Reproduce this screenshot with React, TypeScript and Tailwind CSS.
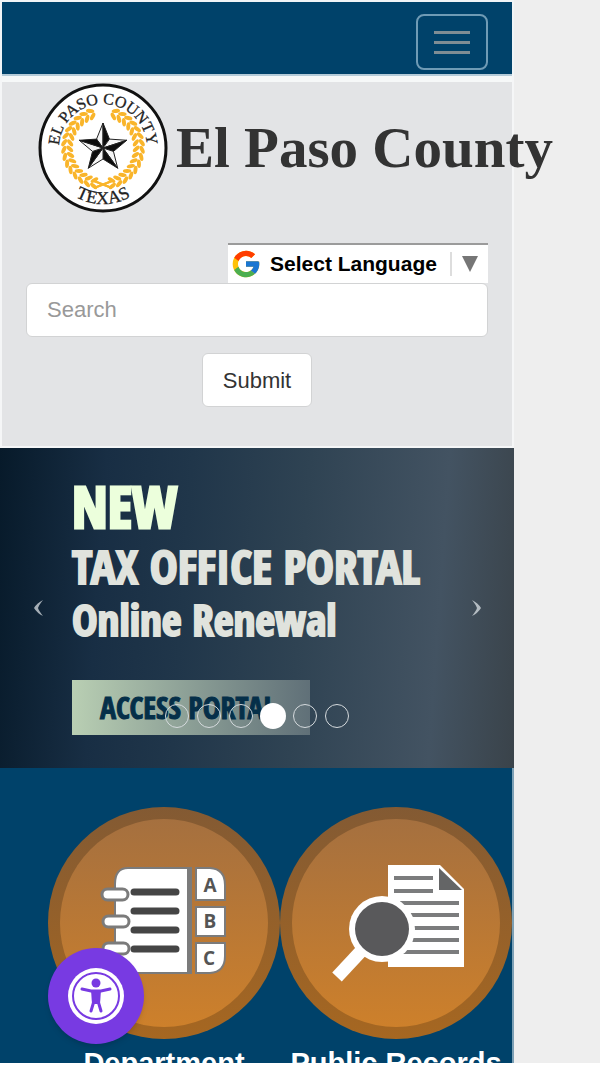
import { FcGoogle } from "react-icons/fc";

const slides = ["Elections", "Budget", "Jobs", "Tax Office Portal", "Parks", "Court"];
const activeSlide = 3;

// Laurel leaves: a pair of leaves at each step, from the bottom up each side
const leafSteps = Array.from({ length: 15 }, (_, i) => i);

const starPoint = (radius: number, deg: number) => {
  const a = (deg * Math.PI) / 180;
  return `${65 + radius * Math.sin(a)},${65 - radius * Math.cos(a)}`;
};

const Laurel = () => (
  <g fill="#f9b52b">
    {leafSteps.map((i) => (
      <g key={i} transform={`rotate(${8 + i * 10.500} 65 65)`}>
        <ellipse cx="61" cy="104" rx="4.200" ry="2" transform="rotate(32 61 104)" />
        <ellipse cx="61" cy="98" rx="4.200" ry="2" transform="rotate(-38 61 98)" />
      </g>
    ))}
    <path d="M56 105 L74 98 M74 105 L56 98" stroke="#f9b52b" strokeWidth="2" />
  </g>
);

const Seal = () => (
  <svg viewBox="0 0 130 130" className="size-[130px] shrink-0" aria-hidden="true">
    <defs>
      <path id="seal-top" d="M21 65 A44 44 0 0 1 109 65" />
      <path id="seal-bottom" d="M9 65 A56 56 0 0 0 121 65" />
    </defs>
    <circle cx="65" cy="65" r="63" fill="#fff" stroke="#111" strokeWidth="3" />
    <g fontFamily="'Liberation Serif', serif" fill="#222" stroke="#222" strokeWidth="0.3" textAnchor="middle">
      <text fontSize="16">
        <textPath href="#seal-top" startOffset="50%">EL PASO COUNTY</textPath>
      </text>
      <text fontSize="18">
        <textPath href="#seal-bottom" startOffset="50%">TEXAS</textPath>
      </text>
    </g>
    <Laurel />
    <g transform="scale(-1 1) translate(-130 0)">
      <Laurel />
    </g>
    {[0, 72, 144, 216, 288].map((deg) => (
      <g key={deg} stroke="#222" strokeWidth="1" strokeLinejoin="round">
        <polygon fill="#f4f4f4" points={`65,65 ${starPoint(25, deg)} ${starPoint(11, deg - 36)}`} />
        <polygon fill="#0c0c0c" points={`65,65 ${starPoint(25, deg)} ${starPoint(11, deg + 36)}`} />
      </g>
    ))}
  </svg>
);

const Disc = ({ id }: { id: string }) => (
  <>
    <defs>
      <linearGradient id={`${id}-face`} x1="0" y1="0" x2="0" y2="1">
        <stop offset="0" stopColor="#a5703f" />
        <stop offset="1" stopColor="#cd802b" />
      </linearGradient>
      <linearGradient id={`${id}-rim`} x1="0" y1="0" x2="0" y2="1">
        <stop offset="0" stopColor="#835a33" />
        <stop offset="1" stopColor="#a66721" />
      </linearGradient>
    </defs>
    <circle cx="116" cy="116" r="116" fill={`url(#${id}-rim)`} />
    <circle cx="116" cy="116" r="104" fill={`url(#${id}-face)`} />
  </>
);

const DepartmentIcon = () => (
  <svg viewBox="0 0 232 232" className="w-full" aria-hidden="true">
    <Disc id="department" />
    <g fill="#fff" stroke="#7b7b7b" strokeWidth="2">
      <path d="M80 61 H140 V166 H80 Q67 166 67 150 V77 Q67 61 80 61 Z" />
      <path d="M148 61 H162 Q177 62 177 78 V93 H148 Z" />
      <path d="M148 100 H177 V129 H148 Z" />
      <path d="M148 136 H177 V149 Q177 165 162 166 H148 Z" />
    </g>
    <g fill="#fff" stroke="#7b7b7b" strokeWidth="3">
      <rect x="54" y="82" width="26" height="11" rx="5.500" />
      <rect x="55" y="109" width="26" height="11" rx="5.500" />
      <rect x="55" y="136" width="26" height="11" rx="5.500" />
    </g>
    <path d="M142 60 V167" stroke="#7b7b7b" strokeWidth="4" />
    <path d="M86 85 H128 M86 104 H128 M86 123 H128 M86 142 H128" stroke="#454545" strokeWidth="7" strokeLinecap="round" />
    <g fill="#555" fontFamily="'Open Sans', sans-serif" fontWeight="700" fontSize="19" textAnchor="middle">
      <text x="162" y="85">A</text>
      <text x="162" y="121">B</text>
      <text x="161" y="158">C</text>
    </g>
  </svg>
);

const RecordsIcon = () => (
  <svg viewBox="0 0 232 232" className="w-full" aria-hidden="true">
    <Disc id="records" />
    <path d="M108 58 H160 L184 82 V160 H108 Z" fill="#fff" />
    <path d="M159 61 L182 83 H159 Z" fill="#646566" />
    <path
      d="M114 71 H153 M114 84 H153 M120 96 H179 M120 108 H179 M120 121 H179 M120 133 H179 M120 145 H179"
      stroke="#7b7c7d"
      strokeWidth="4"
    />
    <path d="M84 141 L57 170" stroke="#fff" strokeWidth="13" />
    <circle cx="102" cy="122" r="33" fill="#fff" />
    <circle cx="102" cy="122" r="27" fill="#59595b" />
  </svg>
);

const services = [
  { label: "Department", Icon: DepartmentIcon },
  { label: "Public Records", Icon: RecordsIcon },
];

const Navigation = () => (
  <nav className="flex justify-end border-2 border-b-0 border-[#f0f4f6] bg-[#00426a] px-6 pt-3 pb-1">
    <button
      type="button"
      aria-label="Toggle navigation"
      className="flex h-14 w-18 flex-col items-center justify-center gap-[7px] rounded-lg border-2 border-[#6f9bb5]"
    >
      <span className="h-[3px] w-9 bg-[#7f8d94]" />
      <span className="h-[3px] w-9 bg-[#7f8d94]" />
      <span className="h-[3px] w-9 bg-[#7f8d94]" />
    </button>
  </nav>
);

const Header = () => (
  <header className="border-2 border-t-0 border-[#f5f6f7] bg-[#e3e4e6]">
    <div className="h-2 border-t-2 border-[#b5cbd8] bg-[#f6f8f8]" />
    <a href="#home" className="flex items-center pt-px pl-9 whitespace-nowrap">
      <Seal />
      <span className="ml-2 font-['Liberation_Serif',serif] text-[57px] leading-[64px] font-bold text-[#333]">
        El Paso County
      </span>
    </a>
    <form className="px-6 pt-[30px] pb-[39px] font-['Liberation_Sans',Arial,sans-serif] text-[22px]">
      <div className="ml-auto flex h-10 w-[260px] items-center border-t-2 border-[#9b9b9b] bg-white pl-0.5">
        <FcGoogle className="size-8 shrink-0" />
        <select
          aria-label="Select Language"
          className="ml-2 min-w-0 flex-1 appearance-none bg-transparent text-[21px] leading-6 font-bold text-black"
        >
          <option>Select Language</option>
        </select>
        <span className="h-6 w-0.5 bg-[#ddd]" />
        <svg viewBox="0 0 14 14" className="mx-[10px] size-4 shrink-0" aria-hidden="true">
          <path d="M0 0 H14 L7 14 Z" fill="#767676" />
        </svg>
      </div>
      <input
        type="text"
        aria-label="Search"
        placeholder="Search"
        className="block h-[54px] w-full rounded-md border border-[#d2d3d4] bg-white px-5 placeholder:text-[#999]"
      />
      <button
        type="submit"
        className="mx-auto mt-4 block h-[54px] rounded-md border border-[#d2d3d4] bg-white px-5 text-[#333]"
      >
        Submit
      </button>
    </form>
  </header>
);

const Carousel = () => (
  <section className="relative h-80 shrink-0 bg-[#071a2a] font-['Open_Sans_Condensed','Roboto_Condensed',sans-serif] font-bold">
    <div className="h-full bg-[linear-gradient(94deg,#071a2a_0%,#182e44_20%,#20364a_36%,#2f4353_58%,#435362_84%,#3a434a_100%)] pt-7 pl-[72px]">
      <h2 className="text-[57px] leading-[60px] text-[#ecffdc] [-webkit-text-stroke:3px_#ecffdc]">NEW</h2>
      <p className="text-[47px] leading-[60px] text-[#e0e3dd] [-webkit-text-stroke:2px_#e0e3dd]">TAX OFFICE PORTAL</p>
      <p className="text-[43px] leading-[48px] text-[#e0e3dd] [-webkit-text-stroke:2px_#e0e3dd]">Online Renewal</p>
      <a
        href="#portal"
        className="mt-9 flex h-[55px] w-[238px] items-center bg-linear-to-r from-[#b9cfb3] to-[#607078] pl-7 text-[30px] text-[#052f49] [-webkit-text-stroke:1px_#052f49]"
      >
        ACCESS PORTAL
      </a>
    </div>
    <button type="button" aria-label="Previous" className="absolute inset-y-0 left-0 flex w-[77px] items-center justify-center">
      <svg viewBox="0 0 10 16" className="h-4 w-[10px]" fill="#a5aeb6">
        <path d="M9 0 Q3 3 0 8 Q3 13 9 16 Q5 11 4 8 Q5 5 9 0 Z" />
      </svg>
    </button>
    <button type="button" aria-label="Next" className="absolute inset-y-0 right-0 flex w-[77px] items-center justify-center">
      <svg viewBox="0 0 10 16" className="h-4 w-[10px]" fill="#b4bcc2">
        <path d="M1 0 Q7 3 10 8 Q7 13 1 16 Q5 11 6 8 Q5 5 1 0 Z" />
      </svg>
    </button>
    <div className="absolute inset-x-0 bottom-9 flex justify-center">
      {slides.map((slide, i) => (
        <button key={slide} type="button" aria-label={slide} className="flex h-8 w-8 items-center justify-center">
          <span className={i === activeSlide ? "size-[26px] rounded-full bg-white" : "size-6 rounded-full border border-[#d5dadd]"} />
        </button>
      ))}
    </div>
  </section>
);

const Services = () => (
  <section className="min-h-0 grow border-r-2 border-[#7da0b5] bg-[#00426a] pt-[39px] pl-12">
    <ul className="grid grid-cols-2">
      {services.map(({ label, Icon }) => (
        <li key={label}>
          <a
            href="#services"
            className="flex flex-col items-center gap-2 font-['Liberation_Sans',Arial,sans-serif] text-[29px] leading-8 font-bold whitespace-nowrap text-white"
          >
            <Icon />
            {label}
          </a>
        </li>
      ))}
    </ul>
  </section>
);

const AccessibilityButton = () => (
  <button
    type="button"
    aria-label="Accessibility options"
    className="absolute bottom-[19px] left-12 size-24 rounded-full bg-[#783ae2] shadow-md"
  >
    <svg viewBox="0 0 96 96" className="size-full" aria-hidden="true">
      <circle cx="48" cy="48" r="28" fill="#fff" />
      <circle cx="48" cy="48" r="23" fill="none" stroke="#783ae2" strokeWidth="2" />
      <circle cx="48" cy="35" r="4.500" fill="#783ae2" />
      <path
        d="M34 41 L43 43 H53 L62 41 M46 44 V53 L43 63 M50 44 V53 L53 63"
        fill="none"
        stroke="#783ae2"
        strokeWidth="3"
        strokeLinecap="round"
      />
      <path d="M43 42 H53 L52 56 H44 Z" fill="#783ae2" />
    </svg>
  </button>
);

export default function App() {
  return (
    <div className="relative h-screen overflow-hidden border-b-2 border-white bg-[#eee] pr-[86px]">
      <div className="flex h-full flex-col">
        <Navigation />
        <Header />
        <Carousel />
        <Services />
      </div>
      <AccessibilityButton />
    </div>
  );
}
